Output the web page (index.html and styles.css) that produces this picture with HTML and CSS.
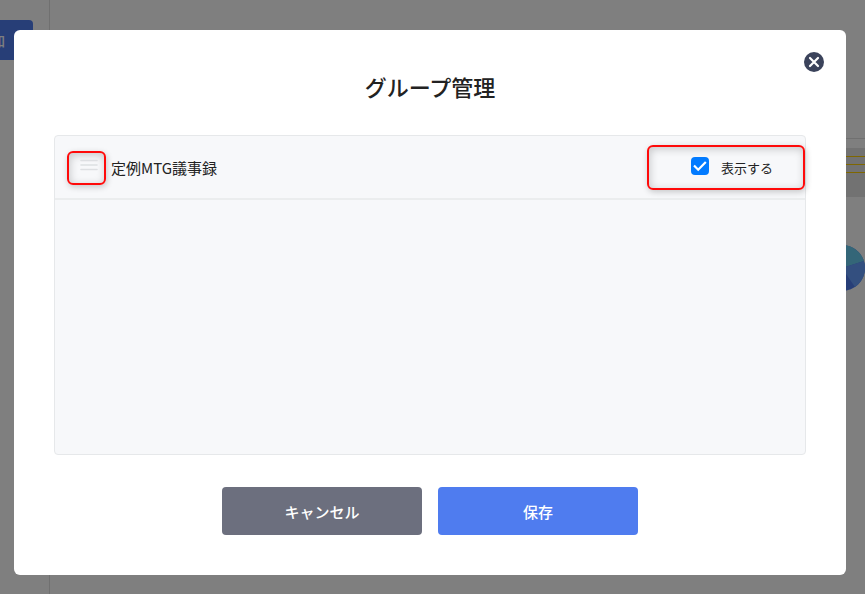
FILE: index.html
```html
<!DOCTYPE html>
<html lang="ja">
<head>
    <meta charset="UTF-8">
    <title>グループ管理</title>
    <link rel="stylesheet" href="styles.css">
</head>
<body>
<div class="page">
    <div class="side">
        <button type="button" class="add">追加</button>
    </div>
    <div class="main">
        <div class="line"></div>
        <div class="band">
            <div class="stripe"></div>
            <div class="stripe"></div>
            <div class="stripe"></div>
        </div>
        <svg class="pie" width="46" height="46" viewBox="0 0 46 46">
            <circle cx="23" cy="23" r="23" fill="#4f7cef"/>
            <path d="M23 23 L45 16 A23 23 0 0 0 23 0 Z" fill="#68cdf0"/>
            <path d="M23 23 L45 16 A23 23 0 0 1 36 42 Z" fill="#669fff"/>
        </svg>
    </div>
</div>

<div class="overlay">
    <div class="modal" role="dialog" aria-labelledby="title">
        <button type="button" class="close" aria-label="閉じる">
            <svg width="20" height="20" viewBox="0 0 20 20">
                <circle cx="10" cy="10" r="10" fill="#3b435b"/>
                <path d="M6 6 L14 14 M14 6 L6 14" stroke="#fff" stroke-width="2.2" stroke-linecap="round"/>
            </svg>
        </button>
        <h1 id="title">グループ管理</h1>
        <ul class="list">
            <li class="item">
                <button type="button" class="handle mark" aria-label="並び替え">
                    <svg width="18" height="12" viewBox="0 0 18 12">
                        <path d="M1 1.5 H17 M1 6 H17 M1 10.5 H17" stroke="#dddfe2" stroke-width="1.6" stroke-linecap="round"/>
                    </svg>
                </button>
                <span class="name">定例MTG議事録</span>
                <label class="show mark">
                    <input type="checkbox" checked>
                    <svg class="tick" width="18" height="18" viewBox="0 0 18 18">
                        <path d="M3 8.5 L7.2 12.7 L14.8 5" fill="none" stroke="#fff" stroke-width="2.2"/>
                    </svg>
                    <span>表示する</span>
                </label>
            </li>
        </ul>
        <div class="buttons">
            <button type="button" class="btn cancel">キャンセル</button>
            <button type="button" class="btn save">保存</button>
        </div>
    </div>
</div>
</body>
</html>
```

FILE: styles.css
```css
* {
    box-sizing: border-box;
    margin: 0;
    padding: 0;
}

body {
    font-family: "Noto Sans CJK JP", sans-serif;
    color: #222;
    background: #fff;
    overflow: hidden;
}

button {
    border: 0;
    font-family: inherit;
    cursor: pointer;
}

/* 背景のページ */
.page {
    display: flex;
    height: 100vh;
}

.side {
    flex: 0 0 50px;
    display: flex;
    justify-content: flex-end;
    align-items: flex-start;
    padding: 20px 16px 0 0;
    border-right: 1px solid #e0e0e0;
    overflow: hidden;
}

.add {
    flex: none;
    height: 40px;
    padding: 0 28px;
    border-radius: 4px;
    color: #fff;
    background: #4f7cef;
    font-size: 14px;
    font-weight: 500;
    white-space: nowrap;
}

.main {
    flex: 1;
    display: flex;
    flex-direction: column;
    padding-top: 138px;
}

.line {
    border-top: 1px solid #e0e0e0;
}

.band {
    height: 49px;
    margin-top: 9px;
    padding-top: 8px;
    background: #e4e4e4;
}

.stripe {
    height: 1px;
    margin-bottom: 7px;
    background: #ffcf00;
}

.pie {
    align-self: flex-end;
    margin-top: 48px;
}

/* モーダル */
.overlay {
    position: fixed;
    inset: 0;
    padding: 30px 19px 19px 14px;
    background: rgba(0, 0, 0, 0.5);
}

.modal {
    position: relative;
    padding: 40px;
    border-radius: 6px;
    background: #fff;
}

.close {
    position: absolute;
    top: 22px;
    right: 22px;
    width: 20px;
    height: 20px;
    background: none;
}

.close svg {
    display: block;
}

h1 {
    margin-bottom: 33px;
    font-size: 22px;
    font-weight: 500;
    line-height: 32px;
    text-align: center;
}

.list {
    height: 320px;
    border: 1px solid #e6e8ea;
    border-radius: 4px;
    background: #f7f8fa;
    list-style: none;
}

.item {
    display: flex;
    align-items: center;
    height: 64px;
    padding-left: 12px;
    border-bottom: 2px solid #ebedee;
}

/* 赤枠 */
.mark {
    border: 2px solid #ff0a0a;
    border-radius: 6px;
    box-shadow: 1px 2px 6px rgba(0, 0, 0, 0.2), inset 1px 2px 8px rgba(0, 0, 0, 0.2);
}

.handle {
    width: 39px;
    height: 34px;
    margin-top: 2px;
    padding: 0 0 6px 5px;
    background: none;
}

.handle svg {
    display: block;
    margin: 0 auto;
}

.name {
    flex: 1;
    padding-left: 5px;
    font-size: 15px;
}

.show {
    display: flex;
    align-items: center;
    gap: 12px;
    width: 158px;
    height: 45px;
    padding-left: 42px;
    font-size: 13px;
}

.show input {
    appearance: none;
    width: 18px;
    height: 18px;
    margin-bottom: 2px;
    border-radius: 4px;
    background: #027bff;
}

.tick {
    margin: 0 0 2px -30px;
    pointer-events: none;
    visibility: hidden;
}

.show input:checked + .tick {
    visibility: visible;
}

.buttons {
    display: flex;
    justify-content: center;
    gap: 16px;
    margin-top: 32px;
}

.btn {
    width: 200px;
    height: 48px;
    border-radius: 4px;
    color: #fff;
    font-size: 15px;
    font-weight: 500;
}

.cancel {
    background: #6c6f7e;
}

.save {
    background: #4f7cef;
}
```
